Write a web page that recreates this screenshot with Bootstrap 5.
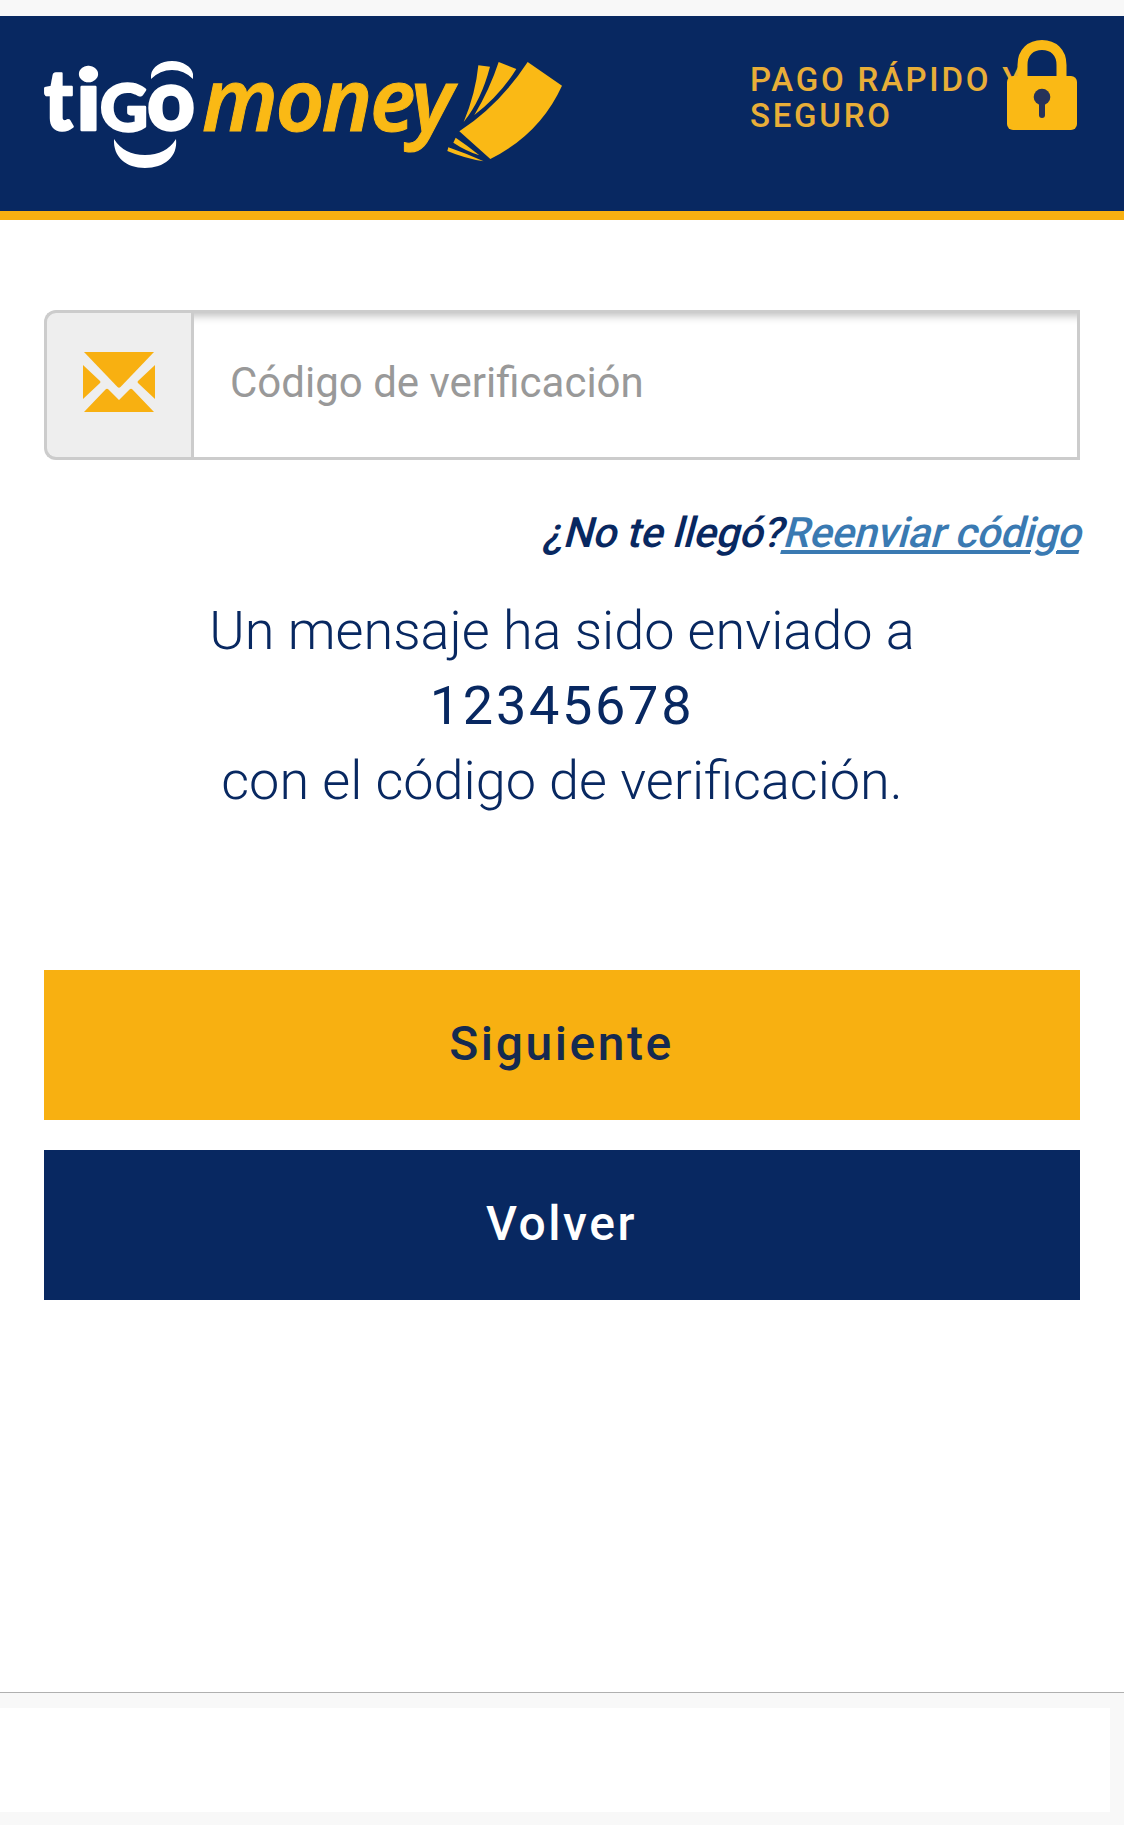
<!DOCTYPE html>
<html lang="es">
<head>
<meta charset="utf-8">
<meta name="viewport" content="width=device-width, initial-scale=1">
<title>Tigo Money</title>
<link href="https://cdn.jsdelivr.net/npm/bootstrap@5.3.0/dist/css/bootstrap.min.css" rel="stylesheet">
<style>
:root{--navy:#082861;--gold:#f8b011}
body{font-family:Roboto,sans-serif;color:var(--navy);background:#f8f8f8;padding-top:16px}
.brand-bar{height:204px;background:var(--navy);border-bottom:9px solid var(--gold);padding:24px 47px 0 24px}
.brand-logo{width:560px;height:160px;overflow:visible}
.tigo-word{font-family:Lato,sans-serif;font-weight:900;fill:#fff;stroke:#fff;stroke-width:2.4;stroke-linejoin:round}
.cap-g{text-transform:uppercase}
.money-word{font-family:"Noto Sans",sans-serif;font-weight:600;font-style:italic;letter-spacing:-2.5px;fill:#fab915;stroke:#fab915;stroke-width:1}
.safe-note{width:326px;height:92px}
.safe-note p{font-size:33px;line-height:36px;letter-spacing:2.75px;font-weight:500;color:#e8ae38;padding-top:22px;width:300px;margin-left:-1px!important}
.safe-lock{right:0;top:0;width:70px;height:91px}
.sheet{height:1473px;border-bottom:1px solid #b0b0b0;padding:90px 44px 0}
.code-group{height:150px}
.code-group .input-group-text{width:150px;background:#eee;border:3px solid #ccc;border-right:0;border-radius:12px 0 0 12px;padding:0 4px 6px 0}
.code-group .form-control{border:3px solid #ccc;border-radius:0;font-size:42px;padding:0 36px 6px;box-shadow:inset 0 12px 9px -9px rgba(0,0,0,.25);margin-left:-3px!important;color:#555}
.code-group .form-control::placeholder{color:#999;opacity:1}
.resend{font-size:42px;line-height:60px;margin-top:43px;font-weight:500}
.resend-slant{transform:skewX(-15deg);transform-origin:50% 44px;letter-spacing:-.26px}
.resend a{color:#3a7ab2}
.notice{font-size:54px;line-height:75px;font-weight:300;margin-top:30px;height:225px}
.notice .phone{font-weight:400;letter-spacing:2.7px}
.act{height:150px;border-radius:0;border:0;font-size:48px;font-weight:500;letter-spacing:2.55px;padding:0 1px 3px 0}
.act-next,.act-next:hover{background:var(--gold);color:#152a50}
.act-back,.act-back:hover{background:var(--navy);color:#fff}
.actions{margin-top:152px;gap:30px}
.blank-strip{height:104px;margin:15px 14px 13px 0}
</style>
<script src="https://cdn.jsdelivr.net/npm/bootstrap@5.3.0/dist/js/bootstrap.bundle.min.js"></script>
</head>
<body>
<header class="brand-bar d-flex justify-content-between align-items-start">
  <svg class="brand-logo" viewBox="24 40 560 160" role="img" aria-label="tigo money">
    <g class="tigo-word">
      <text x="44" y="130" font-size="84" textLength="29" lengthAdjust="spacingAndGlyphs">t</text>
      <text x="76" y="130" font-size="84" textLength="25" lengthAdjust="spacingAndGlyphs">i</text>
      <text class="cap-g" x="100" y="131" font-size="64" textLength="48" lengthAdjust="spacingAndGlyphs">g</text>
      <text x="147" y="130" font-size="86" textLength="48" lengthAdjust="spacingAndGlyphs">o</text>
    </g>
    <path fill="#fff" d="M151 79V75C152 67 161 61 172 61S192 67 193 74V79Q184 70 172 70T151 79Z"/>
    <path fill="#fff" d="M114 139Q124 155 145 155T176 139C178 157 164 168 145 168S113 157 114 139Z"/>
    <text class="money-word" x="202" y="131" font-size="86" textLength="249" lengthAdjust="spacingAndGlyphs">money</text>
    <g fill="#fab915" transform="translate(300 40) scale(.33333)">
      <path d="M683 66L786 137Q720 282 571 357L478 274Q600 193 683 66Z"/>
      <path d="M596 66L649 87Q600 166 523 225Q570 146 596 66Z"/>
      <path d="M535 76L570 80Q544 180 491 246Q527 160 535 76Z"/>
      <path d="M467 293Q503 317 538 346Q496 332 460 308Z"/>
      <path d="M445 322Q500 341 551 364Q494 355 442 333Z"/>
    </g>
  </svg>
  <div class="safe-note position-relative">
    <p class="m-0 text-nowrap">PAGO RÁPIDO Y<br>SEGURO</p>
    <svg class="safe-lock position-absolute" viewBox="0 0 70 91" aria-hidden="true">
      <path fill="none" stroke="#fab915" stroke-width="10" d="M15.500 40V25C15.500 12 24 5 35 5S54.500 12 54.500 25V40"/>
      <rect y="36" width="70" height="54" rx="6" fill="#fab915"/>
      <g fill="#26335a"><circle cx="35" cy="57" r="8.300"/><rect x="32" y="60" width="6" height="18" rx="3"/></g>
    </svg>
  </div>
</header>
<main class="sheet bg-white">
  <div class="input-group code-group">
    <span class="input-group-text justify-content-center">
      <svg width="72" height="60" viewBox="0 0 72 60" fill="#f8b011" aria-hidden="true">
        <path d="M1 0H71L37.500 35Q36 36.500 34.500 35Z"/>
        <path d="M0 13L17 29Q18 30 17 31L0 47Z"/>
        <path d="M72 13L55 29Q54 30 55 31L72 47Z"/>
        <path d="M1 60L22.500 37.500Q24 36 25.500 37.500L36 48L46.500 37.500Q48 36 49.500 37.500L71 60Z"/>
      </svg>
    </span>
    <input type="text" class="form-control" placeholder="Código de verificación" aria-label="Código de verificación">
  </div>
  <p class="resend text-end mb-0"><span class="resend-slant d-inline-block">¿No te llegó?<a href="#">Reenviar código</a></span></p>
  <p class="notice text-center mb-0">Un mensaje ha sido enviado a<br><span class="phone">12345678</span><br>con el código de verificación.</p>
  <div class="actions d-grid">
    <button type="button" class="btn act act-next">Siguiente</button>
    <button type="button" class="btn act act-back">Volver</button>
  </div>
</main>
<footer class="blank-strip bg-white"></footer>
</body>
</html>
